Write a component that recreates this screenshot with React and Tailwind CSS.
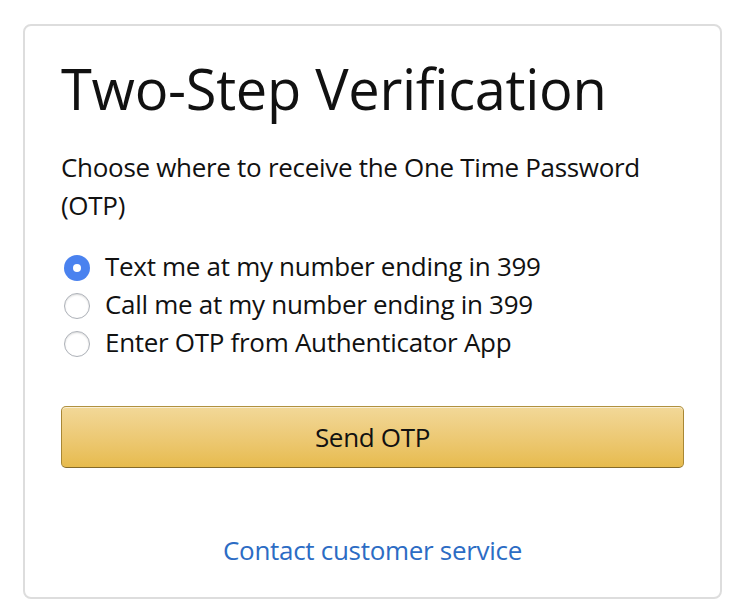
import React from "react";

export default function App() {
  const options = [
    "Text me at my number ending in 399",
    "Call me at my number ending in 399",
    "Enter OTP from Authenticator App",
  ];
  return (
    <div className="min-h-[616px] w-[738px] bg-white pl-[23px] pt-[24px]" style={{ fontFamily: '"Open Sans", Arial, sans-serif' }}>
      <div className="box-border flex h-[575px] w-[699px] flex-col rounded-[8px] border-2 border-[#dddddd] px-[36px] pt-[28px] text-[#111111]">
        <h1 className="text-[56px] font-normal leading-[68px] tracking-[-0.3px]">Two-Step Verification</h1>
        <p className="mt-[26px] text-[26px] leading-[38px] tracking-[-0.3px]">
          Choose where to receive the One Time Password (OTP)
        </p>
        <div className="mt-[23px] flex flex-col">
          {options.map((o, i) => (
            <label key={i} className="flex h-[38px] items-center gap-[15px] text-[26px] leading-[38px] tracking-[-0.3px]">
              {i === 0 ? (
                <span className="ml-[3px] mt-[4px] flex h-[26px] w-[26px] shrink-0 items-center justify-center rounded-full bg-[#4a82ef]">
                  <span className="h-[8px] w-[8px] rounded-full bg-white" />
                </span>
              ) : (
                <span className="ml-[3px] mt-[4px] h-[26px] w-[26px] shrink-0 rounded-full border border-[#adb1b8] bg-white shadow-[inset_0_1px_2px_rgba(0,0,0,0.15)]" />
              )}
              <span>{o}</span>
            </label>
          ))}
        </div>
        <button className="mt-[45px] h-[62px] w-full rounded-[5px] border-[1.5px] border-[#a88734] border-t-[#b0913f] border-b-[#846a29] bg-gradient-to-b from-[#f2d898] to-[#e7bb4d] text-[26px] tracking-[-0.3px] text-[#111111] shadow-[inset_0_1px_0_rgba(255,255,255,0.6)]">
          Send OTP
        </button>
        <div className="mt-[63px] text-center text-[26px] leading-[38px] tracking-[-0.3px] text-[#2c6cc4]">Contact customer service</div>
      </div>
    </div>
  );
}
